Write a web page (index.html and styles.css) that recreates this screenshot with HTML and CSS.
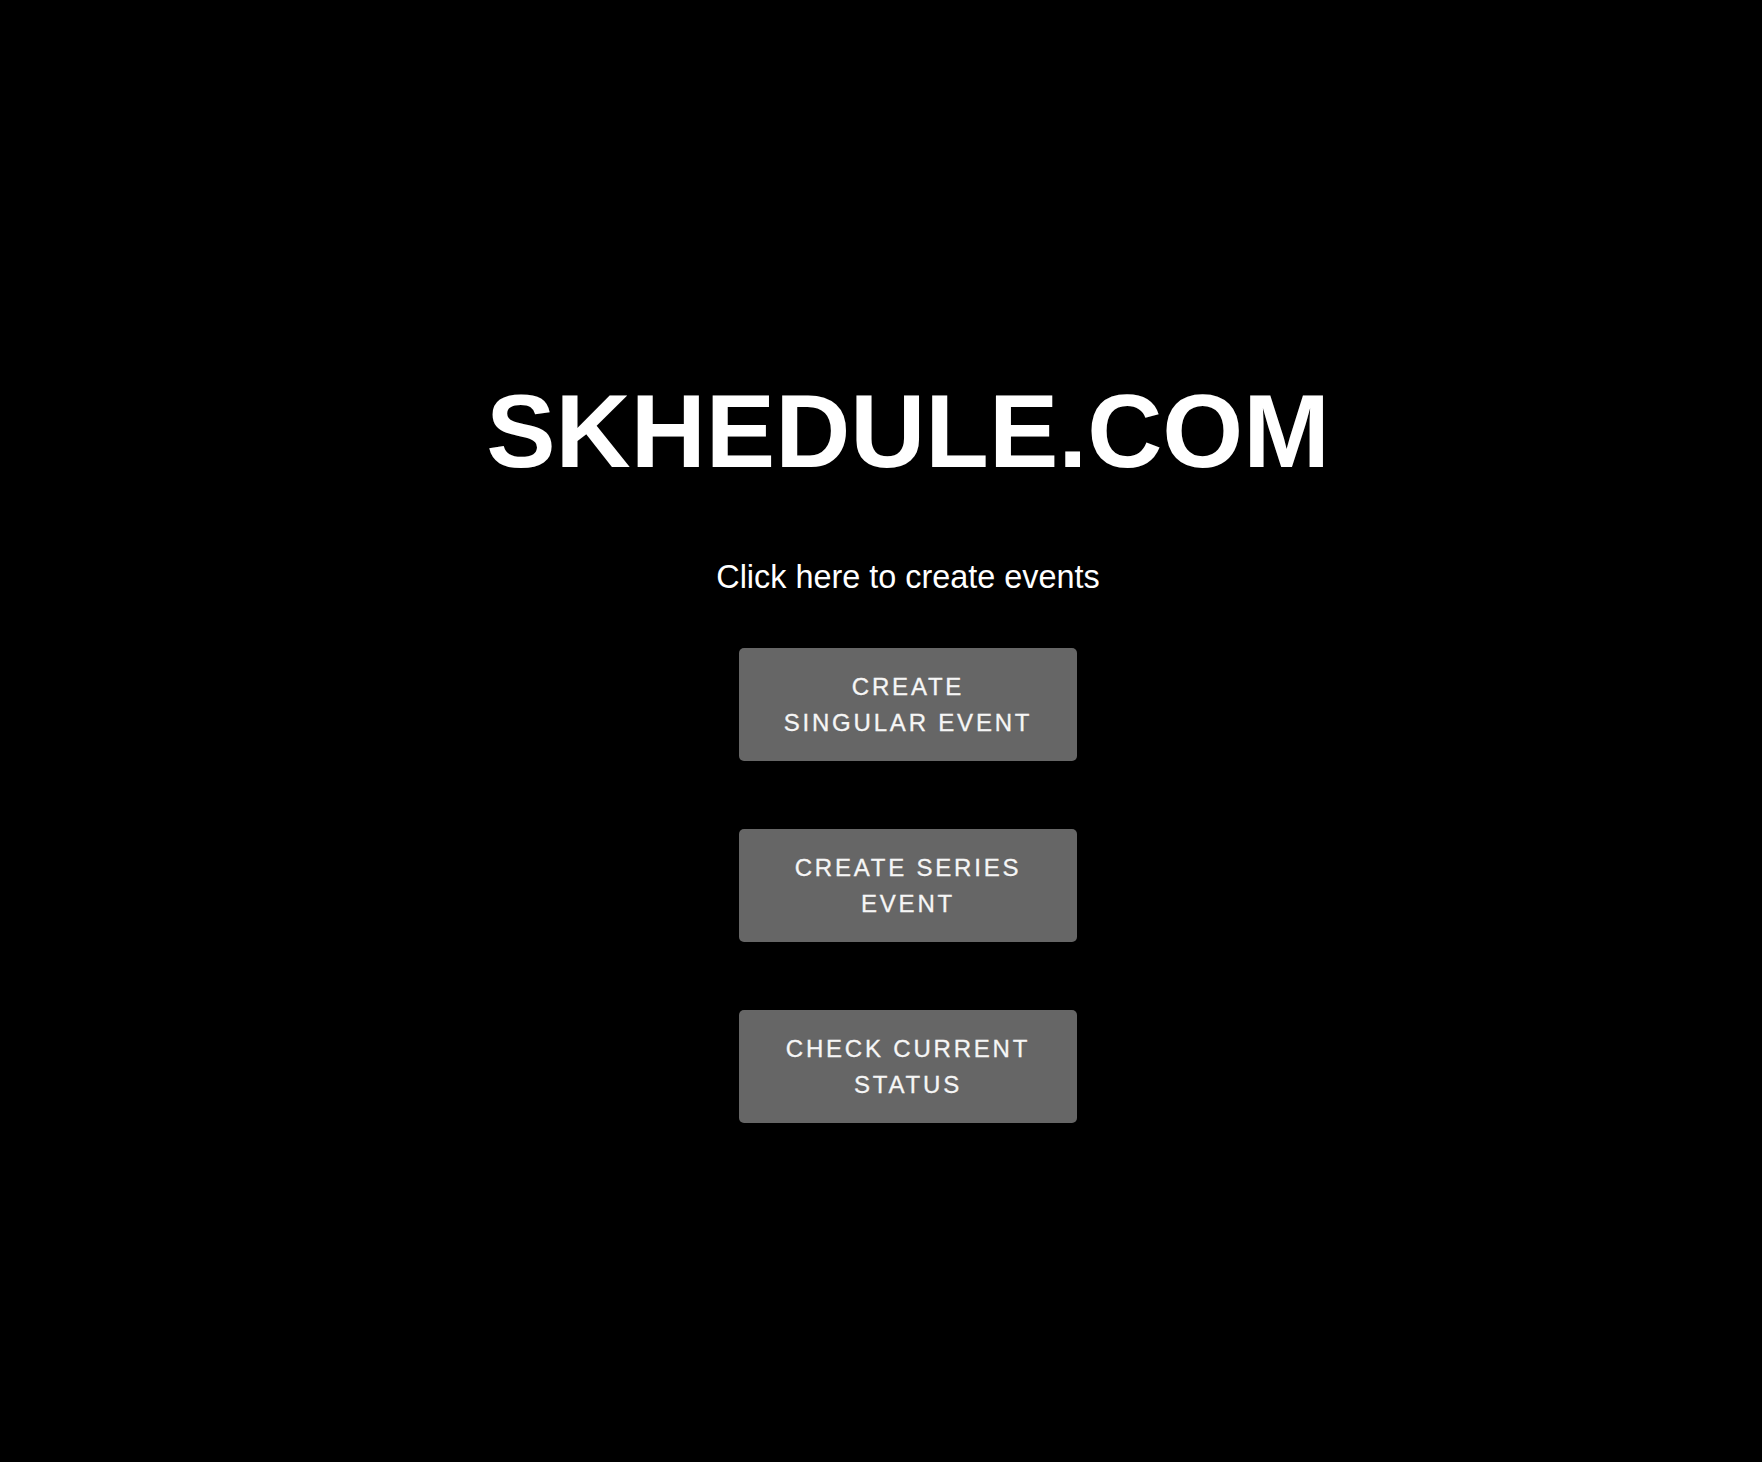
FILE: index.html
```html
<!DOCTYPE html>
<html lang="en">
<head>
<meta charset="utf-8">
<title>Skhedule.com</title>
<link rel="stylesheet" href="styles.css">
</head>
<body>
<main class="page">
  <h1 class="title">SKHEDULE.COM</h1>
  <p class="subtitle">Click here to create events</p>
  <div class="actions">
    <button class="action">CREATE<br>SINGULAR EVENT</button>
    <button class="action">CREATE SERIES<br>EVENT</button>
    <button class="action">CHECK CURRENT<br>STATUS</button>
  </div>
</main>
</body>
</html>
```
FILE: styles.css
```css
html, body {
  margin: 0;
  padding: 0;
  background: #000;
  height: 100%;
}
body {
  font-family: "Liberation Sans", Arial, sans-serif;
  color: #fff;
}
.page {
  display: flex;
  flex-direction: column;
  align-items: center;
  padding-top: 379px;
  padding-left: 54px;
}
.title {
  margin: 0;
  font-size: 104px;
  line-height: 1;
  font-weight: 700;
  color: #fff;
}
.subtitle {
  margin: 78px 0 0;
  font-size: 32.4px;
  line-height: 1;
  color: #fff;
}
.actions {
  margin-top: 55px;
  display: flex;
  flex-direction: column;
  align-items: center;
  gap: 68px;
}
.action {
  width: 338px;
  height: 113px;
  box-sizing: border-box;
  padding: 0 40px;
  border: none;
  border-radius: 5px;
  background: #666;
  color: #f6f6f6;
  font-family: "Liberation Sans", Arial, sans-serif;
  font-size: 24px;
  line-height: 36px;
  letter-spacing: 2.8px;
  text-align: center;
  -webkit-text-stroke: 0.3px #f6f6f6;
}
```
